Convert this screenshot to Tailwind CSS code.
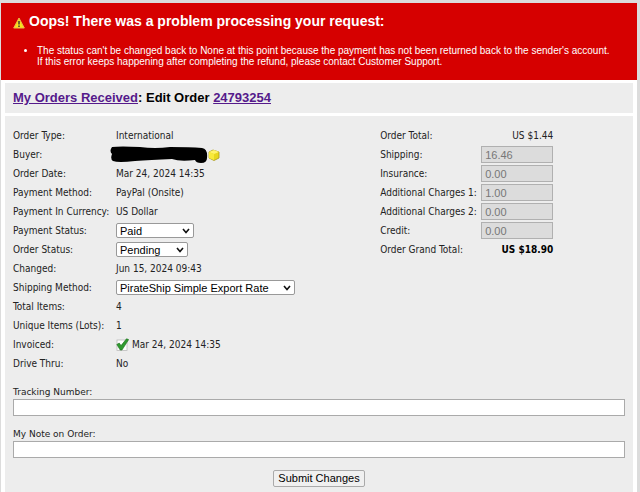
<!DOCTYPE html>
<html lang="en">
<head>
  <meta charset="UTF-8" />
  <meta name="viewport" content="width=device-width, initial-scale=1.0" />
  <title>Edit Order 24793254</title>
  <script src="https://cdn.jsdelivr.net/npm/@tailwindcss/browser@4"></script>
</head>
<body class="bg-[#dcdcdc] pt-[3px] pl-px pr-[3px] min-h-screen flex flex-col text-[10px] text-[#222] font-['DejaVu_Sans_Condensed','DejaVu_Sans',sans-serif]">

  <!-- Error message -->
  <section class="bg-[#d60000] text-white pt-2 pb-[13px] pl-3 pr-1 font-['Liberation_Sans',sans-serif]">
    <h2 class="flex items-center gap-1 text-[14px] leading-5 font-bold">
      <svg class="w-3 h-3 mt-1" viewBox="0 0 12 12">
        <path d="M6 1 L11.3 11 H0.7 Z" fill="#f8e21c" stroke="#e9b84a" stroke-width="1" stroke-linejoin="round" />
        <path d="M6 4 V7.6 M6 8.6 V10" stroke="#333" stroke-width="1.4" />
      </svg>
      Oops! There was a problem processing your request:
    </h2>
    <ul class="list-disc mt-[14px] pl-6 text-[10px] leading-[11px]">
      <li>The status can't be changed back to None at this point because the payment has not been returned back to the sender's account.<br />If this error keeps happening after completing the refund, please contact Customer Support.</li>
    </ul>
  </section>

  <main class="grow flex flex-col gap-[3px] bg-white pt-[3px] px-1">

    <!-- Title -->
    <header class="bg-[#ededed] px-2 py-1 font-['Liberation_Sans',sans-serif]">
      <h1 class="text-[13px] leading-[22px] font-bold text-black">
        <a href="#" class="text-[#551a8b] underline">My Orders Received</a>: Edit Order
        <a href="#" class="text-[#551a8b] underline">24793254</a>
      </h1>
    </header>

    <!-- Order form -->
    <form class="grow bg-[#ededed] px-2 pt-[10px]">
      <div class="flex items-start">
        <table class="w-3/5 table-fixed [&_td]:h-[19px] [&_td]:p-0 [&_th]:p-0 [&_th]:font-normal [&_th]:text-left [&_th]:whitespace-nowrap leading-4">
          <tbody>
            <tr><th class="w-[103px]">Order Type:</th><td>International</td></tr>
            <tr>
              <th>Buyer:</th>
              <td>
                <div class="flex items-center -ml-[6px]">
                  <svg class="w-[98px] h-[18px]" viewBox="0 0 98 18">
                    <path d="M2 1 Q10 0 30 1 Q45 3 60 1 Q80 1 92 2 Q98 3 97 12 Q97 17 91 17 Q86 17 85 14 Q70 16 62 13 Q40 14 25 15 Q8 17 3 15 Q0 13 2 8 Q-1 5 2 1 Z" fill="#000" />
                  </svg>
                  <svg class="w-3 h-3" viewBox="0 0 12 12">
                    <path d="M1 3 L5 1 L11 3 V9 L6 11.5 L1 9 Z" fill="#e8d71e" stroke="#a89a1c" stroke-width="0.8" />
                    <path d="M1 3 L6 5 L11 3 L6 1 Z" fill="#fff36b" />
                    <path d="M6 5 V11 L1 9 V3 Z" fill="#f8ea3c" />
                  </svg>
                </div>
              </td>
            </tr>
            <tr><th>Order Date:</th><td>Mar 24, 2024 14:35</td></tr>
            <tr><th>Payment Method:</th><td>PayPal (Onsite)</td></tr>
            <tr><th>Payment In Currency:</th><td>US Dollar</td></tr>
            <tr>
              <th><label for="payment-status">Payment Status:</label></th>
              <td>
                <div class="relative w-[78px]">
                  <select id="payment-status" class="block w-full h-[15px] appearance-none bg-white border border-[#999] rounded-xs pl-[3px] text-[11px] leading-3 text-black font-['Liberation_Sans',sans-serif]"><option>Paid</option></select>
                  <svg class="absolute right-1 top-1 w-2 h-2 pointer-events-none" viewBox="0 0 8 8"><path d="M1 2 L4 5.5 L7 2" fill="none" stroke="#111" stroke-width="1.6" /></svg>
                </div>
              </td>
            </tr>
            <tr>
              <th><label for="order-status">Order Status:</label></th>
              <td>
                <div class="relative w-[72px]">
                  <select id="order-status" class="block w-full h-[15px] appearance-none bg-white border border-[#999] rounded-xs pl-[3px] text-[11px] leading-3 text-black font-['Liberation_Sans',sans-serif]"><option>Pending</option></select>
                  <svg class="absolute right-1 top-1 w-2 h-2 pointer-events-none" viewBox="0 0 8 8"><path d="M1 2 L4 5.5 L7 2" fill="none" stroke="#111" stroke-width="1.6" /></svg>
                </div>
              </td>
            </tr>
            <tr><th>Changed:</th><td>Jun 15, 2024 09:43</td></tr>
            <tr>
              <th><label for="shipping-method">Shipping Method:</label></th>
              <td>
                <div class="relative w-[179px]">
                  <select id="shipping-method" class="block w-full h-[15px] appearance-none bg-white border border-[#999] rounded-xs pl-[3px] text-[11px] leading-3 text-black font-['Liberation_Sans',sans-serif]"><option>PirateShip Simple Export Rate</option></select>
                  <svg class="absolute right-1 top-1 w-2 h-2 pointer-events-none" viewBox="0 0 8 8"><path d="M1 2 L4 5.5 L7 2" fill="none" stroke="#111" stroke-width="1.6" /></svg>
                </div>
              </td>
            </tr>
            <tr><th>Total Items:</th><td>4</td></tr>
            <tr><th>Unique Items (Lots):</th><td>1</td></tr>
            <tr>
              <th>Invoiced:</th>
              <td>
                <div class="flex items-center gap-[3px]">
                  <svg class="w-[13px] h-[13px]" viewBox="0 0 13 13">
                    <rect x="1" y="2" width="10" height="10.5" fill="#fff" stroke="#bbb" stroke-width="0.8" />
                    <path d="M0.8 6.5 L3.2 5 L5 7.6 L10.5 0.8 L12.7 1.6 L6 12 H4.2 Z" fill="#2f9a2f" stroke="#1d6e1d" stroke-width="0.6" />
                  </svg>
                  Mar 24, 2024 14:35
                </div>
              </td>
            </tr>
            <tr><th>Drive Thru:</th><td>No</td></tr>
          </tbody>
        </table>

        <!-- Totals -->
        <table class="w-[173px] table-fixed [&_td]:h-[19px] [&_td]:p-0 [&_th]:p-0 [&_th]:font-normal [&_th]:text-left [&_th]:whitespace-nowrap leading-4">
          <tbody>
            <tr><th class="w-[101px]">Order Total:</th><td class="text-right">US $1.44</td></tr>
            <tr>
              <th><label for="shipping">Shipping:</label></th>
              <td><input id="shipping" type="text" value="16.46" disabled class="block w-full h-[17px] border border-[#b0b0b0] bg-[#dcdcdc] px-[3px] text-[11px] text-[#777] font-['Liberation_Sans',sans-serif]" /></td>
            </tr>
            <tr>
              <th><label for="insurance">Insurance:</label></th>
              <td><input id="insurance" type="text" value="0.00" disabled class="block w-full h-[17px] border border-[#b0b0b0] bg-[#dcdcdc] px-[3px] text-[11px] text-[#777] font-['Liberation_Sans',sans-serif]" /></td>
            </tr>
            <tr>
              <th><label for="charges-1">Additional Charges 1:</label></th>
              <td><input id="charges-1" type="text" value="1.00" disabled class="block w-full h-[17px] border border-[#b0b0b0] bg-[#dcdcdc] px-[3px] text-[11px] text-[#777] font-['Liberation_Sans',sans-serif]" /></td>
            </tr>
            <tr>
              <th><label for="charges-2">Additional Charges 2:</label></th>
              <td><input id="charges-2" type="text" value="0.00" disabled class="block w-full h-[17px] border border-[#b0b0b0] bg-[#dcdcdc] px-[3px] text-[11px] text-[#777] font-['Liberation_Sans',sans-serif]" /></td>
            </tr>
            <tr>
              <th><label for="credit">Credit:</label></th>
              <td><input id="credit" type="text" value="0.00" disabled class="block w-full h-[17px] border border-[#b0b0b0] bg-[#dcdcdc] px-[3px] text-[11px] text-[#777] font-['Liberation_Sans',sans-serif]" /></td>
            </tr>
            <tr><th>Order Grand Total:</th><td class="text-right font-bold text-black">US $18.90</td></tr>
          </tbody>
        </table>
      </div>

      <!-- Notes -->
      <div class="mt-3 text-[9px] leading-[14px] font-['DejaVu_Sans',sans-serif]">
        <label for="tracking" class="block">Tracking Number:</label>
        <input id="tracking" type="text" class="block w-full h-[17px] bg-white border border-[#aaa] px-1 text-[11px]" />
        <label for="note" class="block mt-[11px]">My Note on Order:</label>
        <input id="note" type="text" class="block w-full h-[17px] bg-white border border-[#aaa] px-1 text-[11px]" />
      </div>

      <div class="mt-3 text-center">
        <button type="submit" class="h-[17px] px-1 border border-[#aaa] bg-[#f0f0f0] rounded-xs text-[11px] leading-[15px] text-black font-['Liberation_Sans',sans-serif]">Submit Changes</button>
      </div>
    </form>
  </main>

</body>
</html>
